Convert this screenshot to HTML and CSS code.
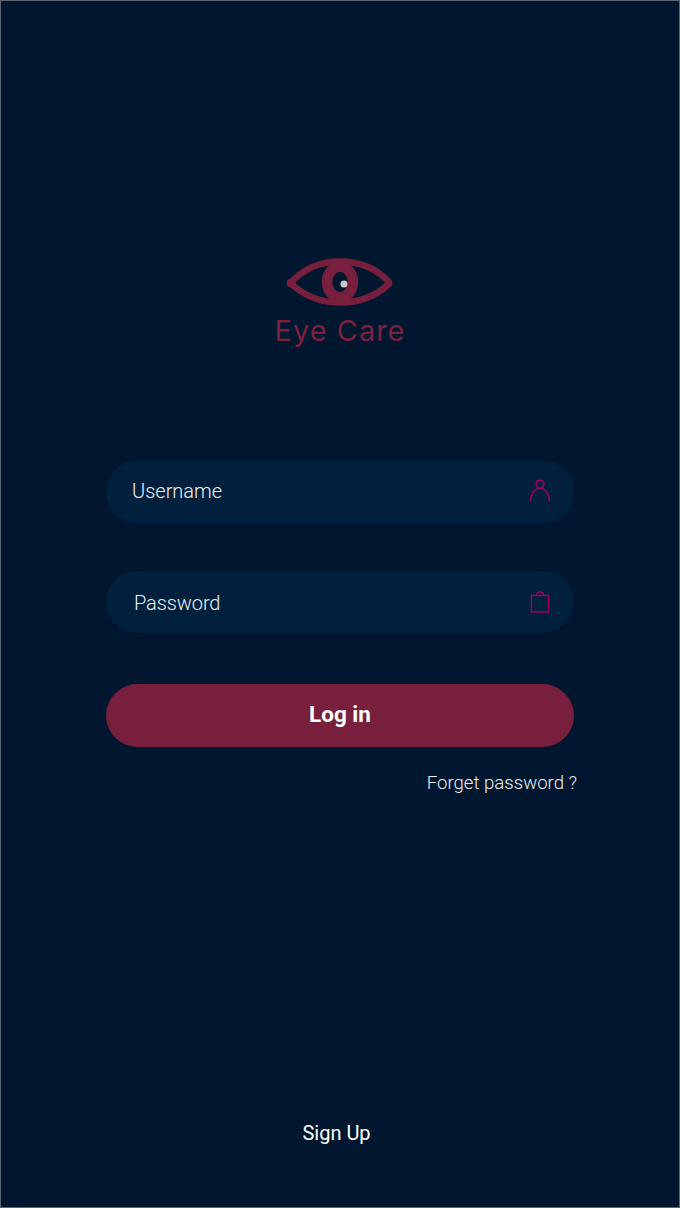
FILE: index.html
```html
<!DOCTYPE html>
<html lang="en">
<head>
    <meta charset="UTF-8">
    <meta name="viewport" content="width=device-width, initial-scale=1.0">
    <title>Eye Care</title>
    <link rel="stylesheet" href="styles.css">
</head>
<body>
    <div class="screen">
        <div class="logo">
            <svg class="logo-icon" width="108" height="52" viewBox="0 0 108 52" fill="none">
                <path d="M4.500 27 C18 12 34 5.500 54 5.500 C74 5.500 90 12 103 26 M4.500 27 C18 40 34 46.500 54 46.500 C74 46.500 90 40 103 28" stroke="#781f3d" stroke-width="6.500" stroke-linecap="round"/>
                <circle cx="5" cy="27" r="4.500" fill="#781f3d"/>
                <ellipse cx="54" cy="26" rx="13" ry="15.500" stroke="#781f3d" stroke-width="10.500"/>
                <circle cx="58" cy="28" r="3.500" fill="#c9c9c9"/>
            </svg>
            <div class="logo-text">Eye Care</div>
        </div>

        <div class="form">
            <div class="field">
                <span class="field-label field-label-username">Username</span>
                <svg class="field-icon" width="22" height="24" viewBox="0 0 22 24" fill="none" stroke="#a3005f" stroke-width="1.600">
                    <circle cx="11" cy="4" r="4"/>
                    <path d="M1.500 21 C1.500 14 5.500 8.500 11 8.500 C16.500 8.500 20.500 14 20.500 21"/>
                </svg>
            </div>
            <div class="field">
                <span class="field-label field-label-password">Password</span>
                <svg class="field-icon" width="22" height="24" viewBox="0 0 22 24" fill="none" stroke="#a3005f" stroke-width="1.400">
                    <rect x="2.500" y="5.500" width="17" height="16.500"/>
                    <path d="M7.500 5.500 C7.500 3.200 9 2 11 2 C13 2 14.500 3.200 14.500 5.500"/>
                </svg>
            </div>
            <button class="login-btn">Log in</button>
            <a class="forgot-link">Forget password ?</a>
        </div>

        <a class="signup-link">Sign Up</a>
    </div>
</body>
</html>
```

FILE: styles.css
```css
html, body {
    margin: 0;
    height: 100%;
}

body {
    background-color: #00172f;
    font-family: Roboto, "Liberation Sans", sans-serif;
}

.screen {
    box-sizing: border-box;
    width: 680px;
    height: 1208px;
    border: 1px solid #5b6570;
    background-color: #00172f;
    display: flex;
    flex-direction: column;
    align-items: center;
    padding-top: 255px;
}

/* logo */
.logo {
    display: flex;
    flex-direction: column;
    align-items: center;
}

.logo-icon {
    display: block;
}

.logo-text {
    margin-top: 3px;
    font-family: Inter, sans-serif;
    font-size: 29px;
    font-weight: 400;
    line-height: 40px;
    letter-spacing: 1px;
    color: #7d1f3f;
}

/* form */
.form {
    box-sizing: border-box;
    width: 468px;
    margin-top: 110px;
    display: flex;
    flex-direction: column;
}

.field {
    height: 62px;
    margin-bottom: 48px;
    padding: 0 23px 0 26px;
    border-radius: 31px;
    background-color: #00203d;
    display: flex;
    align-items: center;
    justify-content: space-between;
}

.field-label {
    font-size: 20px;
    font-weight: 300;
    color: #eef0f2;
}

.field-label-username {
    padding-bottom: 2px;
}

.field-label-password {
    margin-left: 2px;
    padding-top: 2px;
    letter-spacing: -0.100px;
}

.field-icon {
    overflow: visible;
}

.login-btn {
    height: 63px;
    margin-top: 3px;
    padding: 0 0 4px;
    border: none;
    border-radius: 32px;
    background-color: #781f3d;
    color: #fff;
    font-family: Roboto, "Liberation Sans", sans-serif;
    font-size: 22.500px;
    font-weight: 700;
}

.forgot-link {
    align-self: flex-end;
    margin-top: 24px;
    margin-right: -3px;
    font-size: 18.600px;
    font-weight: 300;
    line-height: 24px;
    color: #eef0f2;
}

.signup-link {
    margin-top: 326px;
    margin-right: 7px;
    font-size: 20px;
    line-height: 24px;
    color: #fff;
}
```
